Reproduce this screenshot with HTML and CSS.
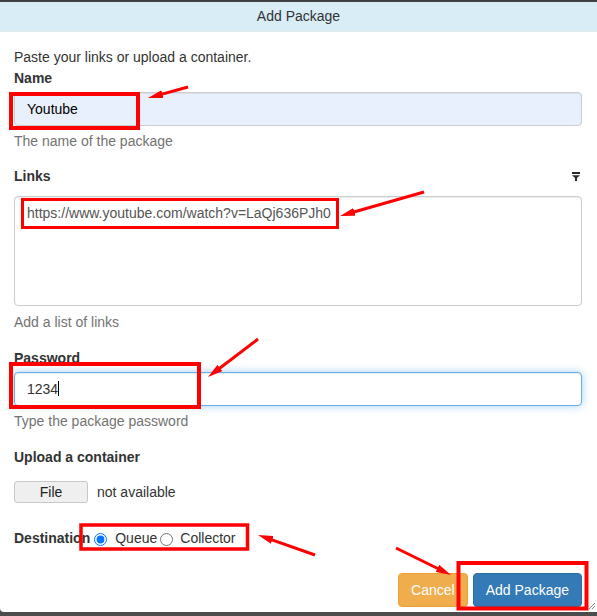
FILE: index.html
```html
<!DOCTYPE html>
<html>
<head>
<meta charset="utf-8">
<title>Add Package</title>
<link rel="stylesheet" href="styles.css">
</head>
<body>
<div class="topbar"></div>
<div class="dialog">
  <div class="dialog-header">Add Package</div>
  <div class="dialog-body">
    <p class="intro">Paste your links or upload a container.</p>
    <div class="group">
      <div class="label">Name</div>
      <div class="control autofill">Youtube</div>
      <div class="help">The name of the package</div>
    </div>
    <div class="group">
      <div class="label-row">
        <span class="label">Links</span>
        <svg class="filter" width="8" height="9" viewBox="0 0 8 9"><rect x="0" y="0" width="8" height="2" fill="#2a2a2a"/><path d="M0 3.2 H8 L5 6 V9 H3 V6 Z" fill="#2a2a2a"/></svg>
      </div>
      <div class="control textarea">https://www.youtube.com/watch?v=LaQj636PJh0</div>
      <div class="help help-links">Add a list of links</div>
    </div>
    <div class="group group-pw">
      <div class="label">Password</div>
      <div class="control focus">1234<span class="caret"></span></div>
      <div class="help">Type the package password</div>
    </div>
    <div class="group group-pw">
      <div class="label">Upload a container</div>
      <div class="file-row"><span class="file-btn">File</span><span class="file-status">not available</span></div>
    </div>
    <div class="dest-row">
      <span class="label">Destination</span>
      <input class="radio radio-first" type="radio" name="dest" checked>
      <span class="radio-text">Queue</span>
      <input class="radio radio-second" type="radio" name="dest">
      <span class="radio-text">Collector</span>
    </div>
  </div>
  <div class="dialog-footer">
    <button class="btn btn-warning" type="button">Cancel</button>
    <button class="btn btn-primary" type="button">Add Package</button>
  </div>
</div>
<svg class="annotations" width="597" height="616" viewBox="0 0 597 616">
  <defs>
    <marker id="ah" markerUnits="userSpaceOnUse" markerWidth="15" markerHeight="8" viewBox="0 0 15 8" refX="7" refY="4" orient="auto">
      <path d="M0 0 L15 4 L0 8 Z" fill="#ff0000"/>
    </marker>
  </defs>
  <g fill="none" stroke="#ff0000">
    <rect x="11" y="94" width="127" height="34" stroke-width="4"/>
    <rect x="22.5" y="199.5" width="315" height="28" stroke-width="3"/>
    <rect x="11" y="364" width="188" height="43" stroke-width="4"/>
    <rect x="81" y="525" width="166.5" height="24" stroke-width="3.5"/>
    <rect x="458.5" y="563" width="128" height="45.5" stroke-width="4"/>
  </g>
  <g stroke="#ff0000" stroke-width="3" marker-end="url(#ah)">
    <line x1="188" y1="87" x2="155.7" y2="95.9"/>
    <line x1="424" y1="192" x2="347.7" y2="213.8"/>
    <line x1="258" y1="339" x2="214.4" y2="372.2"/>
    <line x1="315" y1="555" x2="265.6" y2="537.6"/>
    <line x1="396" y1="548" x2="443.8" y2="571.5"/>
  </g>
  <g stroke="#8a8a8a" stroke-width="1">
    <line x1="595" y1="603" x2="589" y2="609"/>
    <line x1="595" y1="606" x2="592" y2="609"/>
  </g>
</svg>
</body>
</html>
```

FILE: styles.css
```css
* {
  box-sizing: border-box;
}

html, body {
  margin: 0;
  padding: 0;
}

body {
  position: relative;
  width: 597px;
  height: 616px;
  overflow: hidden;
  background: #4c4c4c;
  font-family: "Liberation Sans", Arial, sans-serif;
  font-size: 14px;
  line-height: 20px;
  color: #333;
}

.topbar {
  height: 2px;
  background: #404040;
}

.dialog {
  background: #fff;
  border-radius: 0 0 0 4px;
  width: 597px;
}

.dialog-header {
  height: 30px;
  line-height: 29px;
  background: #d9edf7;
  border-bottom: 1px solid #e2e8ec;
  text-align: center;
  color: #333;
}

.dialog-body {
  padding: 15px 15px 0 14px;
}

.intro {
  margin: 0 0 1px;
}

.label {
  font-weight: bold;
  display: block;
}

.group {
  margin-bottom: 15px;
}

.group-pw {
  margin-top: 16px;
}

.group .label {
  margin-bottom: 4px;
}

.label-row {
  display: flex;
  justify-content: space-between;
  align-items: flex-start;
  margin-bottom: 10px;
}

.label-row .label {
  margin-bottom: 0;
}

.filter {
  display: block;
  margin-top: 6px;
  margin-right: 2px;
}

.control {
  height: 34px;
  border: 1px solid #ccc;
  border-radius: 4px;
  padding: 6px 12px;
  color: #555;
  background: #fff;
  box-shadow: inset 0 1px 1px rgba(0, 0, 0, 0.075);
  white-space: nowrap;
}

.autofill {
  background: #e8f0fe;
  color: #000;
}

.textarea {
  height: 110px;
}

.focus {
  border-color: #66afe9;
  box-shadow: inset 0 1px 1px rgba(0, 0, 0, 0.075), 0 0 8px rgba(102, 175, 233, 0.6);
  color: #333;
}

.caret {
  display: inline-block;
  width: 1px;
  height: 15px;
  background: #000;
  vertical-align: -2px;
}

.help {
  margin-top: 5px;
  color: #737373;
}

.help-links {
  margin-top: 6px;
}

.group-pw + .group-pw {
  margin-bottom: 0;
}

.file-row {
  display: flex;
  align-items: center;
  margin-top: 14px;
}

.file-btn {
  display: block;
  width: 74px;
  height: 22px;
  line-height: 20px;
  text-align: center;
  background: #efefef;
  border: 1px solid #c8c8c8;
  border-radius: 3px;
  color: #222;
}

.file-status {
  margin-left: 9px;
}

.dest-row {
  display: flex;
  align-items: center;
  margin-top: 25px;
}

.radio {
  width: 13px;
  height: 13px;
  margin: 2px 0 0;
}

.radio-first {
  margin-left: 4px;
  margin-right: 8px;
}

.radio-second {
  margin-left: 3px;
  margin-right: 7px;
}

.dialog-footer {
  display: flex;
  justify-content: flex-end;
  gap: 5px;
  padding: 25px 15px 5px;
}

.btn {
  font-family: "Liberation Sans", Arial, sans-serif;
  font-size: 14px;
  line-height: 20px;
  height: 34px;
  padding: 6px 12px;
  border: 1px solid transparent;
  border-radius: 4px;
  color: #fff;
  margin: 0;
}

.btn-warning {
  background: #f0ad4e;
  border-color: #eea236;
}

.btn-primary {
  background: #337ab7;
  border-color: #2e6da4;
}

.annotations {
  position: absolute;
  top: 0;
  left: 0;
  pointer-events: none;
}
```
